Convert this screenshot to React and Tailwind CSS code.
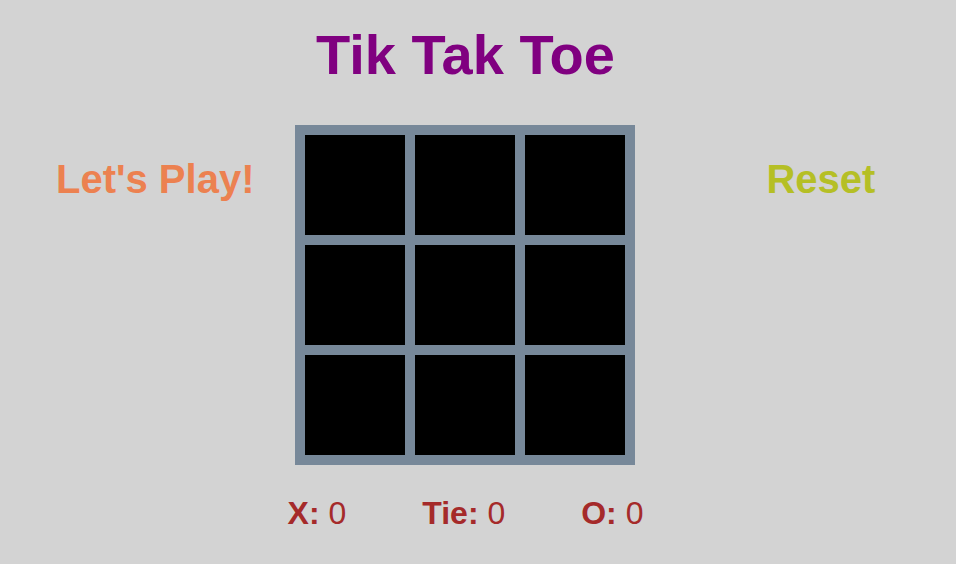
export default function App() {
  const cells = Array.from({ length: 9 });
  return (
    <div className="w-[956px] h-[564px] bg-[#d3d3d3] overflow-hidden" style={{ fontFamily: '"Liberation Sans", Arial, sans-serif' }}>
      <div className="flex flex-row items-start pl-[56px]">
        <div className="pt-[157px] text-[40px] leading-[45px] font-bold text-[#ec8150] whitespace-nowrap">Let's Play!</div>
        <div className="ml-[41px] w-[340px] flex flex-col items-center pt-[24px]">
          <h1 className="text-[56px] leading-[62px] font-bold text-[#800080] whitespace-nowrap">Tik Tak Toe</h1>
          <div className="mt-[39px] w-[340px] h-[340px] bg-[#778899] p-[10px] grid grid-cols-3 gap-[10px]">
            {cells.map((_, i) => (
              <div key={i} className="bg-black w-[100px] h-[100px]" />
            ))}
          </div>
          <div className="mt-[30px] flex flex-row gap-[76px] text-[32px] leading-[37px] text-[#a52a2a] whitespace-nowrap">
            <div><span className="font-bold">X:</span> 0</div>
            <div><span className="font-bold">Tie:</span> 0</div>
            <div><span className="font-bold">O:</span> 0</div>
          </div>
        </div>
        <div className="ml-[131px] pt-[157px] text-[40px] leading-[45px] font-bold text-[#b5bf25] whitespace-nowrap">Reset</div>
      </div>
    </div>
  );
}
